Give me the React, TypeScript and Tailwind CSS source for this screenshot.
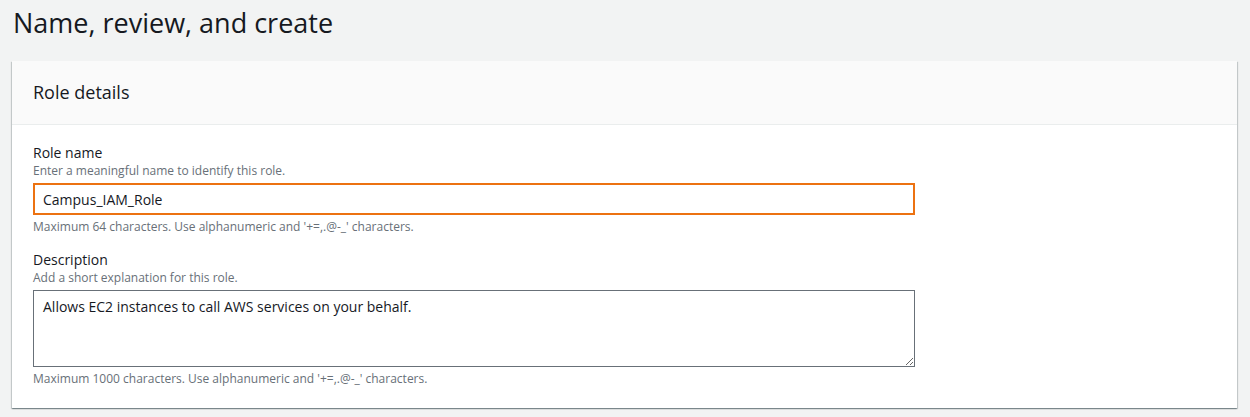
import React from "react";

const font = { fontFamily: '"Open Sans", "Noto Sans", Arial, sans-serif' };

function Field({
  label,
  hint,
  constraint,
  children
}: {
  label: string;
  hint: string;
  constraint: string;
  children: React.ReactNode;
}) {
  return (
    <div className="w-[882px]">
      <div className="text-[14px] leading-[20px] text-[#16191f]">{label}</div>
      <div className="text-[12px] leading-[16px] text-[#687078]">{hint}</div>
      <div className="mt-[4px]">{children}</div>
      <div className="mt-[4px] text-[12px] leading-[16px] text-[#687078]">{constraint}</div>
    </div>
  );
}

export default function App() {
  return (
    <div className="min-h-[417px] bg-[#f2f3f3] pt-[5px] text-[#16191f]" style={font}>
      <h1 className="pl-[13px] text-[27px] leading-[36px] font-normal text-[#16191f]">Name, review, and create</h1>
      <div className="mx-[12px] mt-[20px] w-[1225px] bg-white shadow-[0_1px_1px_0_rgba(0,28,36,0.3),1px_1px_1px_0_rgba(0,28,36,0.15),-1px_1px_1px_0_rgba(0,28,36,0.15)]">
        <div className="flex h-[64px] items-center border-b border-[#eaeded] bg-[#fafafa] px-[21px] pb-[2px]">
          <h2 className="text-[18px] leading-[22px] font-normal">Role details</h2>
        </div>
        <div className="flex flex-col gap-[15px] px-[21px] pt-[18px] pb-[21px]">
          <Field
            label="Role name"
            hint="Enter a meaningful name to identify this role."
            constraint="Maximum 64 characters. Use alphanumeric and '+=,.@-_' characters."
          >
            <div className="flex h-[32px] items-center border-2 border-[#ec7211] px-[8px] text-[14px]">Campus_IAM_Role</div>
          </Field>
          <Field
            label="Description"
            hint="Add a short explanation for this role."
            constraint="Maximum 1000 characters. Use alphanumeric and '+=,.@-_' characters."
          >
            <textarea
              readOnly
              defaultValue="Allows EC2 instances to call AWS services on your behalf."
              className="block h-[77px] w-full border border-[#687078] px-[9px] py-[6px] text-[14px] leading-[20px] text-[#16191f] outline-none"
              style={font}
            />
          </Field>
        </div>
      </div>
    </div>
  );
}
